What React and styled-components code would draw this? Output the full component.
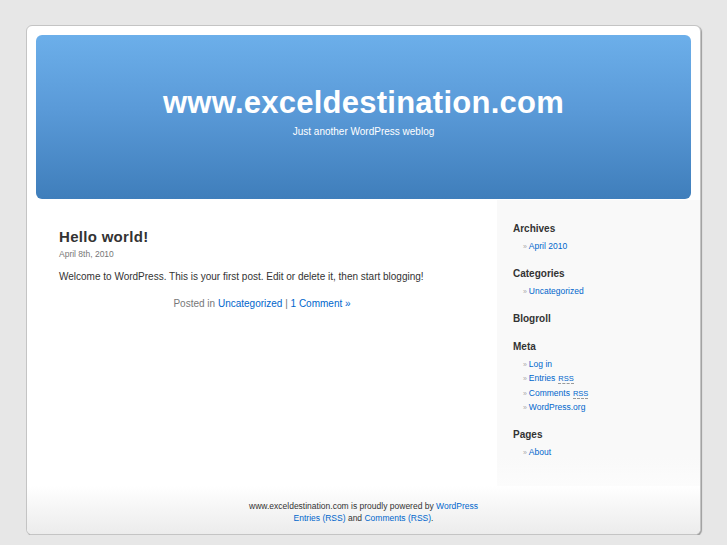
import styled, { createGlobalStyle } from "styled-components";

/* 페이지 기본 */
const GlobalStyle = createGlobalStyle`
    html, body {
        margin:0;
        padding:0;
        background:#e7e7e7;
        font-family:"Liberation Sans", Arial, sans-serif;
        color:#333;
    }
    a {
        color:#06c;
        text-decoration:none;
    }
`;

const Page = styled.div`
    box-sizing:border-box;
    width:675px;
    height:510px;
    margin:25px auto 0;
    background:#fff;
    border:1px solid #c4c4c4;
    border-radius:6px;
    box-shadow:1px 1px 1px #9c9c9c;
    display:flex;
    flex-direction:column;
    overflow:hidden;
`;

const HeaderWrap = styled.div`
    padding:9px 9px 1px;
`;

const Header = styled.div`
    height:164px;
    border-radius:6px;
    background:linear-gradient(180deg, #6cafea 0%, #5a9ad8 45%, #3f7ebb 100%);
    display:flex;
    flex-direction:column;
    align-items:center;
    box-sizing:border-box;
    padding-top:52px;
    .title{
        color:#fff;
        font-weight:700;
        font-size:31px;
        line-height:31px;
        letter-spacing:0.25px;
    }
    .desc{
        color:#fff;
        font-size:10px;
        line-height:12px;
        margin-top:8px;
    }
`;

const Main = styled.div`
    flex:1;
    display:flex;
`;

const Content = styled.div`
    width:470px;
    box-sizing:border-box;
    padding:27px 32px 0;
`;

const PostTitle = styled.h2`
    margin:0;
    font-size:15px;
    line-height:20px;
    font-weight:700;
    color:#333;
    letter-spacing:0.3px;
`;

const PostDate = styled.small`
    display:block;
    margin-top:1px;
    font-size:8.5px;
    line-height:12px;
    color:#777;
`;

const PostBody = styled.p`
    margin:9.5px 0 0;
    font-size:10px;
    line-height:14px;
    color:#333;
`;

const PostMeta = styled.p`
    margin:13px 0 0;
    font-size:10px;
    line-height:14px;
    color:#777;
    text-align:center;
`;

const Sidebar = styled.div`
    flex:1;
    background:linear-gradient(180deg, #f9f9f9 0%, #f9f9f9 90%, #fcfcfc 100%);
    padding:22px 0 0 16px;
`;

const Section = styled.div`
    margin-bottom:13.5px;
`;

const SideTitle = styled.h3`
    margin:0 0 3px;
    font-size:10px;
    line-height:14px;
    font-weight:700;
    color:#333;
`;

const SideList = styled.ul`
    list-style:none;
    margin:0;
    padding:0 0 0 10px;
    li{
        font-size:8.5px;
        line-height:14.5px;
        height:14.5px;
    }
    li::before{
        content:"» ";
        color:#aaa;
        font-size:7px;
    }
`;

const Abbr = styled.abbr`
    font-size:7.5px;
    line-height:0;
    text-decoration:none;
    border-bottom:1px dashed #999;
    margin-left:3px;
`;

const Footer = styled.div`
    height:48px;
    box-sizing:border-box;
    padding-top:14px;
    background:linear-gradient(180deg, #ffffff 0%, #f6f6f6 45%, #ececec 100%);
    text-align:center;
    font-size:8.5px;
    line-height:12px;
    color:#333;
`;

const sidebar = [
    { title: "Archives", items: ["April 2010"] },
    { title: "Categories", items: ["Uncategorized"] },
    { title: "Blogroll", items: [] },
    { title: "Meta", items: ["Log in", "Entries|RSS", "Comments|RSS", "WordPress.org"] },
    { title: "Pages", items: ["About"] },
];

const App = () => {
    return (
        <>
            <GlobalStyle />
            <Page>
                <HeaderWrap>
                    <Header>
                        <a href="#" className="title">www.exceldestination.com</a>
                        <div className="desc">Just another WordPress weblog</div>
                    </Header>
                </HeaderWrap>
                <Main>
                    <Content>
                        <PostTitle>Hello world!</PostTitle>
                        <PostDate>April 8th, 2010</PostDate>
                        <PostBody>Welcome to WordPress. This is your first post. Edit or delete it, then start blogging!</PostBody>
                        <PostMeta>
                            Posted in <a href="#">Uncategorized</a> | <a href="#">1 Comment »</a>
                        </PostMeta>
                    </Content>
                    <Sidebar>
                        {sidebar.map(s => (
                            <Section key={s.title}>
                                <SideTitle>{s.title}</SideTitle>
                                {s.items.length > 0 && (
                                    <SideList>
                                        {s.items.map(it => {
                                            const [label, abbr] = it.split("|");
                                            return (
                                                <li key={it}>
                                                    <a href="#">{label}{abbr && <Abbr>{abbr}</Abbr>}</a>
                                                </li>
                                            );
                                        })}
                                    </SideList>
                                )}
                            </Section>
                        ))}
                    </Sidebar>
                </Main>
                <Footer>
                    www.exceldestination.com is proudly powered by <a href="#">WordPress</a>
                    <br />
                    <a href="#">Entries (RSS)</a> and <a href="#">Comments (RSS)</a>.
                </Footer>
            </Page>
        </>
    );
};

export default App;
